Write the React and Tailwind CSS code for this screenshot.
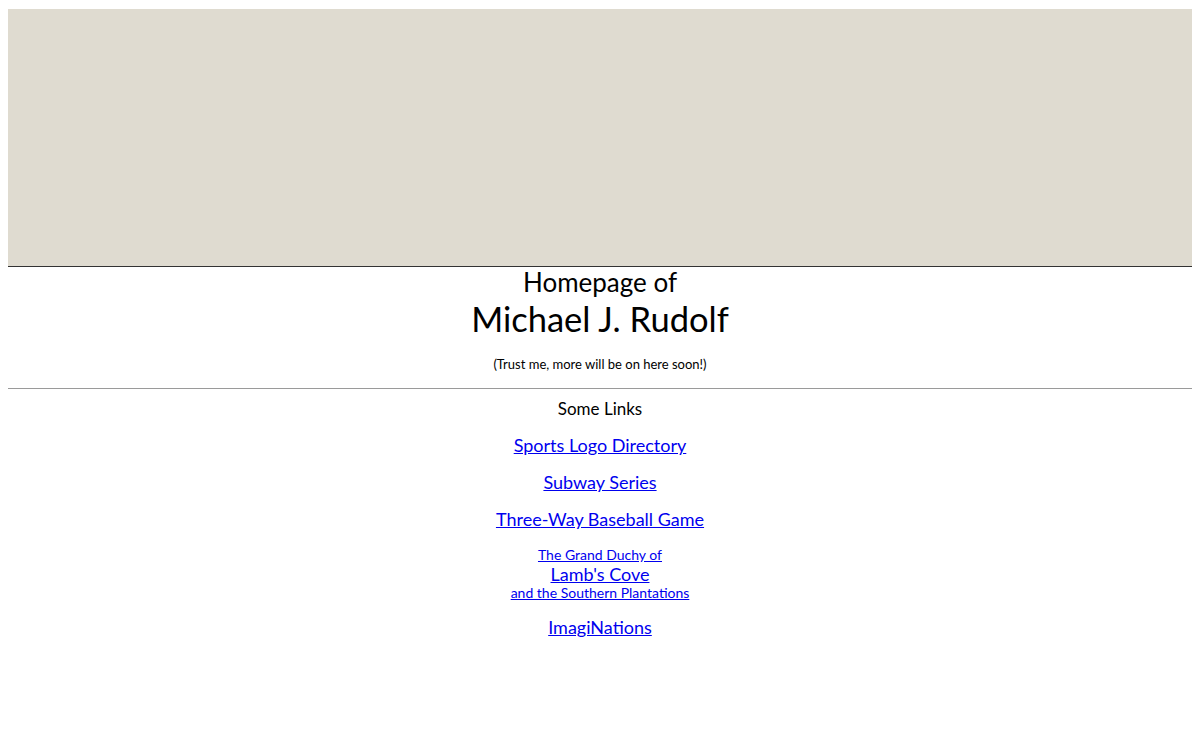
import React from 'react';

const links = [
  { label: 'Sports Logo Directory', y: 'mt-[13px]' },
  { label: 'Subway Series', y: 'mt-[13px]' },
  { label: 'Three-Way Baseball Game', y: 'mt-[13px]' },
];

const App = () => {
  return (
    <div
      className="min-h-screen bg-white px-2 pt-[9px] text-black text-center"
      style={{ fontFamily: '"Segoe UI", Lato, "Noto Sans", sans-serif' }}
    >
      {/* banner */}
      <div className="h-[258px] bg-[#dfdbd0] border-b border-[#333333]" />

      {/* title */}
      <div className="text-[26px] leading-[32px] -mt-[1px]">Homepage of</div>
      <div className="text-[34.5px] leading-[42px]">Michael J. Rudolf</div>
      <div className="text-[13px] leading-[16px] mt-[16px]">(Trust me, more will be on here soon!)</div>

      <hr className="mt-[16px] border-0 border-t-[1.5px] border-[#9a9a9a]" />

      {/* links */}
      <div className="text-[17px] leading-[22px] mt-[9px]">Some Links</div>
      {links.map((l) => (
        <div key={l.label} className={`${l.y} text-[18px] leading-[24px]`}>
          <a href="#" className="text-[#0000ee] underline">{l.label}</a>
        </div>
      ))}
      <div className="mt-[15px] leading-none">
        <a href="#" className="text-[#0000ee] underline">
          <span className="block text-[14px] leading-[18px]">The Grand Duchy of</span>
          <span className="block text-[18px] leading-[20px]">Lamb's Cove</span>
          <span className="block text-[14px] leading-[18px]">and the Southern Plantations</span>
        </a>
      </div>
      <div className="mt-[13px] text-[18px] leading-[24px]">
        <a href="#" className="text-[#0000ee] underline">ImagiNations</a>
      </div>
    </div>
  );
};

export default App;
